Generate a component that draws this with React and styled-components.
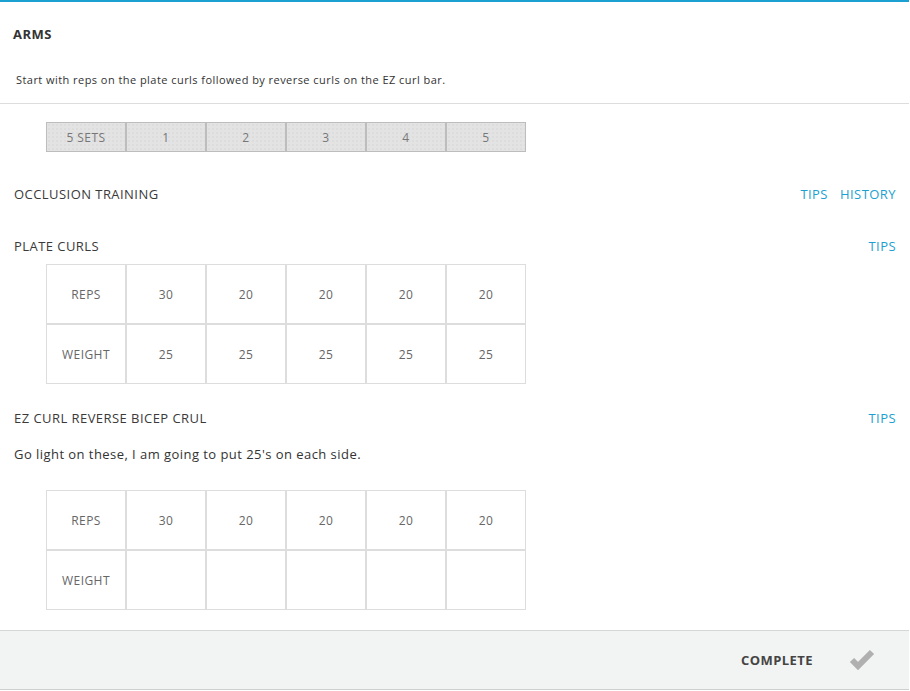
import React from "react";
import styled, { createGlobalStyle } from "styled-components";

const GlobalStyle = createGlobalStyle`
  html, body {
    margin: 0;
    padding: 0;
    background: #fff;
  }
  body {
    font-family: "Open Sans", "Liberation Sans", sans-serif;
    color: #333;
    letter-spacing: 0.45px;
  }
`;

const sets = [1, 2, 3, 4, 5];

const exercises = [
  {
    name: "PLATE CURLS",
    links: ["TIPS"],
    reps: [30, 20, 20, 20, 20],
    weight: [25, 25, 25, 25, 25],
  },
  {
    name: "EZ CURL REVERSE BICEP CRUL",
    links: ["TIPS"],
    note: "Go light on these, I am going to put 25's on each side.",
    reps: [30, 20, 20, 20, 20],
    weight: ["", "", "", "", ""],
  },
];

const CheckIcon = () => (
  <svg width="26" height="22" viewBox="0 0 26 22">
    <polyline
      points="3,12 9,18 23,4"
      fill="none"
      stroke="#b0b0b0"
      strokeWidth="6"
      strokeLinejoin="miter"
    />
  </svg>
);

const App = () => {
  return (
    <>
      <GlobalStyle />
      <Card>
        <Header>
          <Title>ARMS</Title>
          <Description>
            Start with reps on the plate curls followed by reverse curls on the EZ curl bar.
          </Description>
        </Header>
        <Body>
          <SetsBar>
            <SetCell>5 SETS</SetCell>
            {sets.map((s) => (
              <SetCell key={s}>{s}</SetCell>
            ))}
          </SetsBar>

          <SectionRow $top={33}>
            <SectionName>OCCLUSION TRAINING</SectionName>
            <Links>
              <LinkText>TIPS</LinkText>
              <LinkText>HISTORY</LinkText>
            </Links>
          </SectionRow>

          {exercises.map((ex, i) => (
            <React.Fragment key={ex.name}>
              <SectionRow $top={i === 0 ? 34 : 25}>
                <SectionName>{ex.name}</SectionName>
                <Links>
                  {ex.links.map((l) => (
                    <LinkText key={l}>{l}</LinkText>
                  ))}
                </Links>
              </SectionRow>
              {ex.note && <Note>{ex.note}</Note>}
              <Table $top={ex.note ? 27 : 9}>
                <Cell>REPS</Cell>
                {ex.reps.map((r, j) => (
                  <Cell key={"r" + j}>{r}</Cell>
                ))}
                <Cell>WEIGHT</Cell>
                {ex.weight.map((w, j) => (
                  <Cell key={"w" + j}>{w}</Cell>
                ))}
              </Table>
            </React.Fragment>
          ))}
        </Body>
        <Footer>
          <CompleteLabel>COMPLETE</CompleteLabel>
          <CheckWrap>
            <CheckIcon />
          </CheckWrap>
        </Footer>
      </Card>
    </>
  );
};

const Card = styled.div`
  width: 909px;
  border-top: 2px solid #1c9fd1;
  background: #fff;
`;

const Header = styled.div`
  padding: 23px 14px 15px 13px;
  border-bottom: 1px solid #dddddd;
`;

const Title = styled.h1`
  margin: 0;
  font-size: 13px;
  line-height: 18px;
  font-weight: 700;
  color: #333;
`;

const Description = styled.p`
  margin: 29px 0 0 3px;
  font-size: 11px;
  line-height: 16px;
  color: #333;
`;

const Body = styled.div`
  padding: 18px 13px 20px 14px;
`;

const SetsBar = styled.div`
  display: flex;
  margin-left: 32px;
`;

const SetCell = styled.div`
  width: 80px;
  height: 30px;
  box-sizing: border-box;
  border: 1px solid #bdbdbd;
  background-color: #e3e3e3;
  background-image: radial-gradient(#d4d4d4 0.6px, transparent 0.8px);
  background-size: 4px 4px;
  display: flex;
  align-items: center;
  justify-content: center;
  font-size: 12px;
  color: #777;
`;

const SectionRow = styled.div`
  display: flex;
  justify-content: space-between;
  align-items: center;
  margin-top: ${(p) => p.$top}px;
  height: 18px;
`;

const SectionName = styled.h2`
  margin: 0;
  font-size: 13px;
  line-height: 18px;
  font-weight: 400;
  color: #3a3a3a;
`;

const Links = styled.div`
  display: flex;
  gap: 12px;
`;

const LinkText = styled.span`
  font-size: 13px;
  line-height: 18px;
  color: #1c9fd1;
  cursor: pointer;
`;

const Note = styled.p`
  margin: 18px 0 0;
  font-size: 13px;
  line-height: 18px;
  color: #333;
`;

const Table = styled.div`
  display: grid;
  grid-template-columns: repeat(6, 80px);
  grid-auto-rows: 60px;
  margin: ${(p) => p.$top}px 0 0 32px;
`;

const Cell = styled.div`
  box-sizing: border-box;
  border: 1px solid #dddddd;
  display: flex;
  align-items: center;
  justify-content: center;
  font-size: 12px;
  color: #666;
`;

const Footer = styled.div`
  display: flex;
  align-items: center;
  justify-content: flex-end;
  height: 58px;
  padding-right: 34px;
  background: #f2f3f3;
  border-top: 1px solid #d6d6d6;
  border-bottom: 1px solid #cfcfcf;
`;

const CompleteLabel = styled.span`
  font-size: 13px;
  font-weight: 700;
  color: #444;
`;

const CheckWrap = styled.span`
  display: flex;
  margin-left: 36px;
  margin-top: -2px;
`;

export default App;
